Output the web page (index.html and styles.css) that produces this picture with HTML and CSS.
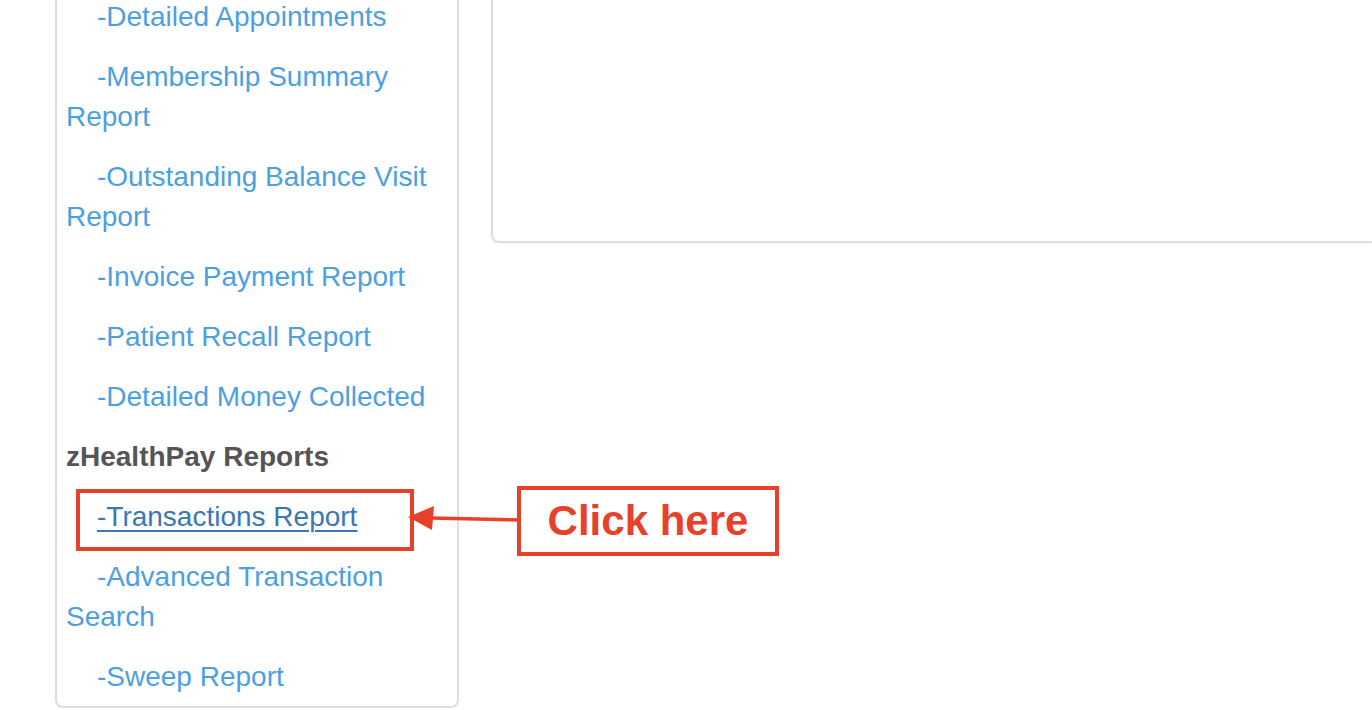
FILE: index.html
```html
<!DOCTYPE html>
<html lang="en">
  <head>
    <meta charset="UTF-8" />
    <title>Reports</title>
    <link rel="stylesheet" href="styles.css">
  </head>
  <body>
    <div class="page">
      <div class="sidebar">
        <ul class="report-list">
          <li><a href="#">-Detailed Appointments</a></li>
          <li><a href="#">-Membership Summary Report</a></li>
          <li><a href="#">-Outstanding Balance Visit Report</a></li>
          <li><a href="#">-Invoice Payment Report</a></li>
          <li><a href="#">-Patient Recall Report</a></li>
          <li><a href="#">-Detailed Money Collected</a></li>
          <li class="group-title">zHealthPay Reports</li>
          <li><a href="#" class="current">-Transactions Report</a></li>
          <li><a href="#">-Advanced Transaction Search</a></li>
          <li><a href="#">-Sweep Report</a></li>
        </ul>
      </div>

      <div class="content">
        <div class="content-panel"></div>
      </div>
    </div>

    <div class="callout-target"></div>
    <svg class="callout-arrow" width="120" height="30" viewBox="0 0 120 30">
      <line x1="22" y1="12" x2="112" y2="14" stroke="#e8412a" stroke-width="3.5" />
      <polygon points="0,11 26,0 24,24" fill="#e8412a" />
    </svg>
    <div class="callout-label">Click here</div>
  </body>
</html>
```

FILE: styles.css
```css
* {
  margin: 0;
  padding: 0;
  box-sizing: border-box;
}
body {
  background-color: #fff;
  font-family: "Liberation Sans", Arial, sans-serif;
  overflow: hidden;
}
.page {
  display: flex;
  align-items: flex-start;
  gap: 32px;
  padding-left: 55px;
  margin-top: -16px;
}
.sidebar {
  width: 404px;
  border: 2px solid #dedede;
  border-radius: 8px;
  padding: 0 10px 0 9px;
  box-shadow: 0 1px 2px rgba(0, 0, 0, 0.05);
}
.report-list {
  list-style: none;
  padding-top: 1px;
}
.report-list li {
  font-size: 28px;
  line-height: 40px;
  padding: 10px 0;
}
.report-list li:last-child {
  padding-bottom: 9px;
}
.report-list a {
  display: block;
  text-indent: 31px;
  color: #4ca0e2;
  text-decoration: none;
}
.report-list a.current {
  color: #3a78b5;
  text-decoration: underline;
  text-decoration-thickness: 2px;
  text-underline-offset: 4px;
}
.report-list .group-title {
  font-weight: bold;
  color: #555;
}
.content {
  flex: 1;
}
.content-panel {
  height: 259px;
  border: 2px solid #dedede;
  border-right: none;
  border-radius: 0 0 0 8px;
  box-shadow: 0 1px 2px rgba(0, 0, 0, 0.05);
}
.callout-target {
  position: absolute;
  left: 76px;
  top: 489px;
  width: 338px;
  height: 62px;
  border: 4px solid #e8412a;
}
.callout-arrow {
  position: absolute;
  left: 408px;
  top: 506px;
}
.callout-label {
  position: absolute;
  left: 517px;
  top: 486px;
  width: 262px;
  height: 70px;
  border: 4px solid #e8412a;
  color: #e8412a;
  font-size: 42px;
  font-weight: bold;
  display: flex;
  align-items: center;
  justify-content: center;
}
```
